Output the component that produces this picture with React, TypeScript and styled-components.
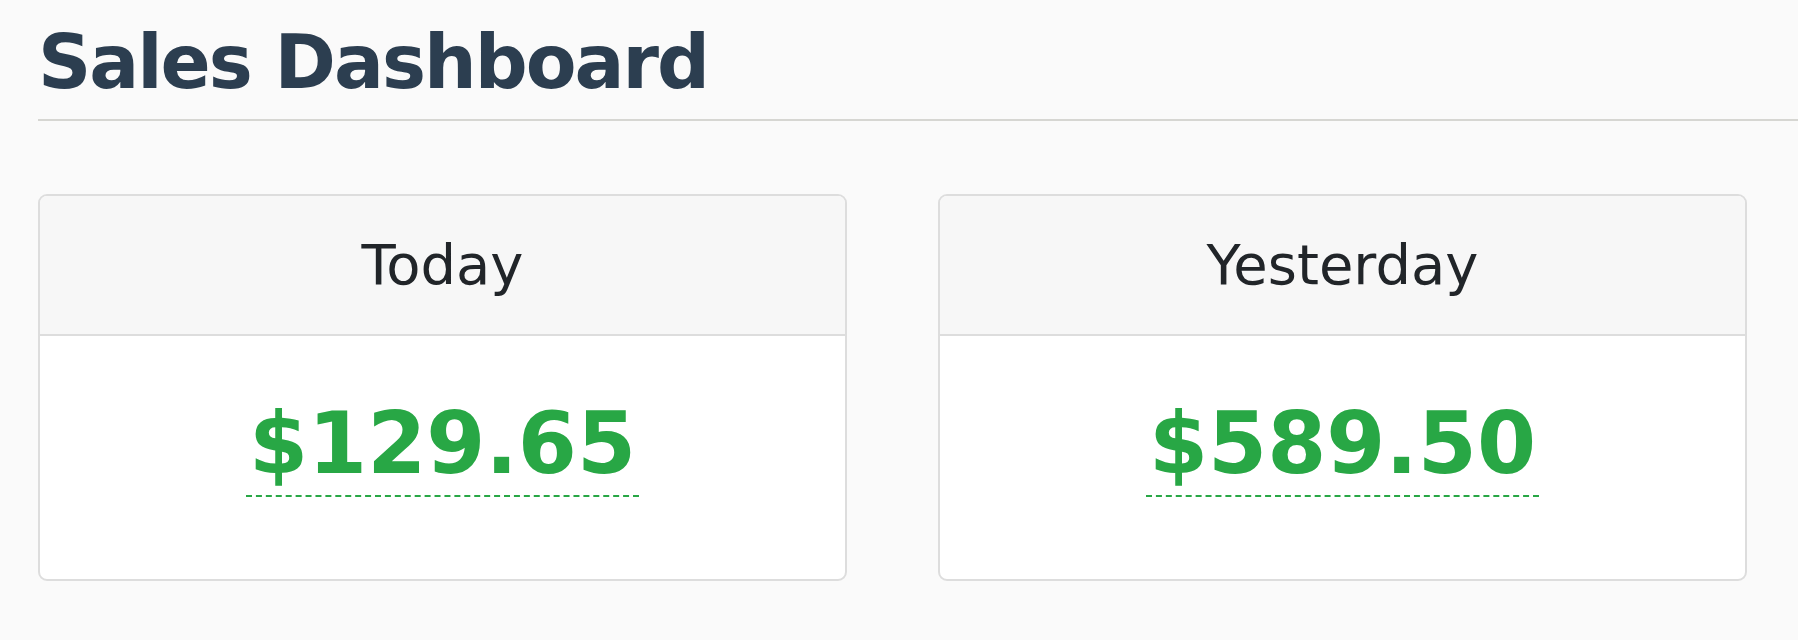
import React from "react";
import styled, { createGlobalStyle } from "styled-components";

const GlobalStyle = createGlobalStyle`
  html, body {
    margin: 0;
    padding: 0;
    background: #fafafa;
    font-family: "DejaVu Sans", Verdana, sans-serif;
  }
`;

const Page = styled.div`
  padding: 19px 0 58px 38px;
`;

const Title = styled.h1`
  margin: 0;
  padding: 0 0 14px 0;
  font-size: 74px;
  font-weight: bold;
  letter-spacing: -2px;
  line-height: normal;
  color: #2c3e50;
  border-bottom: 2px solid #d6d6d2;
`;

const Cards = styled.div`
  display: grid;
  grid-template-columns: 1fr 1fr;
  gap: 91px;
  margin: 73px 51px 0 0;
`;

const Card = styled.section`
  background: #ffffff;
  border: 2px solid #dddddd;
  border-radius: 9px;
  overflow: hidden;
`;

const CardHeader = styled.header`
  background: #f7f7f7;
  border-bottom: 2px solid #dddddd;
  padding: 36px 0 37px;
  text-align: center;
  font-size: 56px;
  line-height: normal;
  color: #212529;
`;

const CardBody = styled.div`
  padding: 58px 0 82px;
  text-align: center;
`;

const Amount = styled.span`
  display: inline-block;
  padding: 0 3px 2px;
  font-size: 85px;
  font-weight: bold;
  line-height: normal;
  color: #28a745;
  border-bottom: 2px dashed #28a745;
`;

const data = [
  { label: "Today", amount: "$129.65" },
  { label: "Yesterday", amount: "$589.50" },
];

export default function App() {
  return (
    <>
      <GlobalStyle />
      <Page>
        <Title>Sales Dashboard</Title>
        <Cards>
          {data.map((d) => (
            <Card key={d.label}>
              <CardHeader>{d.label}</CardHeader>
              <CardBody>
                <Amount>{d.amount}</Amount>
              </CardBody>
            </Card>
          ))}
        </Cards>
      </Page>
    </>
  );
}
